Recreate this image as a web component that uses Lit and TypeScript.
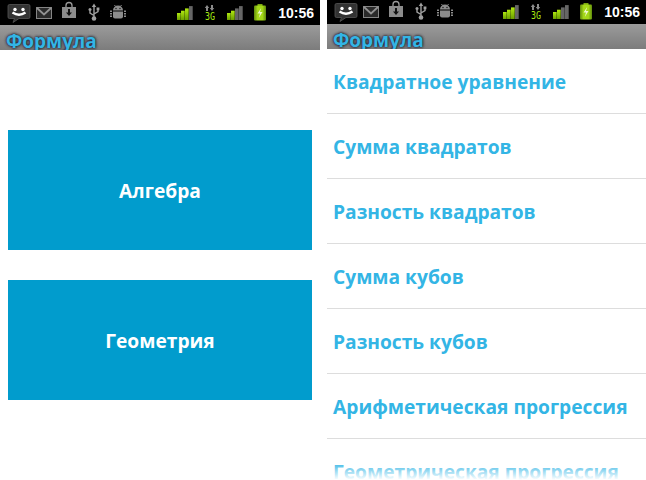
import { LitElement, html, css, svg } from "lit";
import { customElement } from "lit/decorators.js";

const smiley = svg`<svg class="ic" width="28" height="24" viewBox="0 0 28 24">
<path d="M1.500 3.500h19a1.500 1.500 0 0 1 1.500 1.500v11a1.500 1.500 0 0 1-1.500 1.500H11L5 21.500l1.500-4H1.500A1.500 1.500 0 0 1 0 16V5A1.500 1.500 0 0 1 1.500 3.500z" fill="#333" stroke="#555" stroke-width="0.800"/>
<circle cx="7" cy="8.500" r="1.700" fill="#fff"/><circle cx="15" cy="8.500" r="1.700" fill="#fff"/>
<path d="M4.500 11.500q6.500 4.500 13 0" fill="none" stroke="#fff" stroke-width="2.400"/></svg>`;
const gmail = svg`<svg class="ic" width="26" height="24" viewBox="0 0 26 24">
<rect x="0.500" y="6.500" width="15" height="11" fill="#2a2a2a" stroke="#858585"/><path d="M1 7l7 6.500L15 7" fill="none" stroke="#929292" stroke-width="1.800"/></svg>`;
const store = svg`<svg class="ic" width="26" height="24" viewBox="0 0 26 24">
<path d="M4 6V4.500a3 3 0 0 1 6 0V6" fill="none" stroke="#9a9a9a" stroke-width="1.300"/><rect x="0" y="6" width="14" height="11" fill="#8c8c8c"/>
<path d="M6 8h2v3.500h2L7 15 4 11.500h2z" fill="#111"/></svg>`;
const usb = svg`<svg class="ic" width="22" height="24" viewBox="0 0 22 24">
<path d="M6 18V5M6 14.500L2 12V9.500M6 13l4-2.500V8.500" fill="none" stroke="#a0a0a0" stroke-width="1.400"/><path d="M6 2.500l2.200 3.500H3.800z" fill="#a0a0a0"/>
<circle cx="6" cy="17.500" r="2.300" fill="#a0a0a0"/><circle cx="2" cy="8.500" r="1.500" fill="#a0a0a0"/><rect x="8.600" y="6.500" width="2.800" height="2.800" fill="#a0a0a0"/></svg>`;
const bug = svg`<svg class="ic" width="16" height="24" viewBox="0 0 16 24">
<path d="M3 9.500a5 5 0 0 1 10 0z" fill="#8c8c8c"/><path d="M5.500 5.500L4.500 4M10.500 5.500l1-1.500" stroke="#8c8c8c"/><circle cx="6" cy="7.500" r="0.700" fill="#111"/><circle cx="10" cy="7.500" r="0.700" fill="#111"/>
<path d="M3 10.500h10v5a2 2 0 0 1-2 2H5a2 2 0 0 1-2-2z" fill="#8c8c8c"/><path d="M1 9.500v7M15 9.500v7" stroke="#8c8c8c" stroke-width="2" stroke-dasharray="1.500 1"/></svg>`;
const signal = (n: number, w: number) => svg`<svg class="ic" width=${w} height="24" viewBox="0 0 ${w} 24">
<defs><linearGradient id="g" x1="0" x2="0" y1="0" y2="1"><stop offset="0" stop-color="#b0e810"/><stop offset="1" stop-color="#6c9f00"/></linearGradient></defs>
${[0, 1, 2, 3].map((i) => svg`<rect x=${i * 4} y=${12 - i * 2.300} width="3.700" height=${7 + i * 2.300} fill=${i < n ? "url(#g)" : "#666"}/>`)}</svg>`;
const threeG = svg`<svg class="ic" width="22" height="24" viewBox="0 0 22 24">
<path d="M2 4l2.200 3H3v3H1V7H-.2zM7 10L4.800 7H6V4h2v3h1.200z" fill="#8c8c8c"/>
<text x="0" y="19" font-family="DejaVu Sans Mono, monospace" font-size="10" fill="#a8ea10" textLength="10" lengthAdjust="spacingAndGlyphs">3G</text></svg>`;
const battery = svg`<svg class="ic" width="24" height="24" viewBox="0 0 24 24">
<defs><linearGradient id="b" x1="0" x2="1" y1="0" y2="0"><stop offset="0" stop-color="#5f8a0c"/><stop offset="0.300" stop-color="#a4d818"/><stop offset="0.700" stop-color="#a4d818"/><stop offset="1" stop-color="#5f8a0c"/></linearGradient></defs>
<rect x="3.500" y="3" width="5" height="2" fill="#7aa810"/><rect x="0" y="4.500" width="12" height="15" rx="1" fill="url(#b)"/>
<path d="M7.200 7L3.500 12.500H6L4.800 17 8.500 11H6z" fill="#eef7d0"/></svg>`;

@customElement("status-bar")
class StatusBar extends LitElement {
  static styles = css`
    :host { display: flex; align-items: flex-start; background: #000; height: 25px; flex: none; padding-left: 8px; box-sizing: border-box; }
    .ic { flex: none; display: block; overflow: visible; }
    .right { display: flex; margin-left: auto; margin-right: 6px; }
    .time { font: bold 14px/25px "Liberation Sans", Arial, sans-serif; color: #fff; }
    .left { display: flex; }
  `;
  render() {
    return html`<div class="left">${smiley}${gmail}${store}${usb}${bug}</div>
      <div class="right">${signal(3, 28)}${threeG}${signal(2, 27)}${battery}<span class="time">10:56</span></div>`;
  }
}

@customElement("title-bar")
class TitleBar extends LitElement {
  static styles = css`
    :host {
      display: block; flex: none; height: 25px; overflow: hidden; padding-left: 6px;
      background: linear-gradient(#9b9b9b, #7c7c7c);
    }
    span {
      display: block; font: bold 19px/30px "Open Sans", sans-serif; color: #33b5e5; margin-top: 1px;
      text-shadow: 0 0 3px #223, 0 0 3px #223;
    }
  `;
  render() { return html`<span>Формула</span>`; }
}

const items = ["Квадратное уравнение", "Сумма квадратов", "Разность квадратов", "Сумма кубов", "Разность кубов", "Арифметическая прогрессия", "Геометрическая прогрессия"];

@customElement("app-root")
class AppRoot extends LitElement {
  static styles = css`
    :host { display: flex; gap: 7px; width: 646px; height: 480px; overflow: hidden; background: #fff; font-family: "Open Sans", sans-serif; }
    .phone { display: flex; flex-direction: column; height: 480px; overflow: hidden; position: relative; }
    .a { width: 320px; }
    .a status-bar { padding-top: 1px; }
    .b { width: 319px; }
    .b status-bar { height: 24px; }
    .menu { flex: 1; display: flex; flex-direction: column; justify-content: center; gap: 30px; padding: 0 8px; }
    .btn { height: 120px; background: #019ccd; color: #fff; font-weight: 700; font-size: 19.2px; display: flex; align-items: center; justify-content: center; }
    .row { flex: none; height: 64px; border-bottom: 1px solid #ddd; padding-left: 6px; display: flex; align-items: center; font-size: 19.2px; font-weight: 700; color: #33b5e5; white-space: nowrap; }
    .fade { position: absolute; left: 0; right: 0; bottom: 0; height: 18px; background: linear-gradient(rgba(255,255,255,0), #fff); }
  `;
  render() {
    return html`
      <div class="phone a"><status-bar></status-bar><title-bar></title-bar>
        <div class="menu"><div class="btn">Алгебра</div><div class="btn">Геометрия</div></div>
      </div>
      <div class="phone b"><status-bar></status-bar><title-bar></title-bar>
        ${items.map((t) => html`<div class="row">${t}</div>`)}
        <div class="fade"></div>
      </div>`;
  }
}
